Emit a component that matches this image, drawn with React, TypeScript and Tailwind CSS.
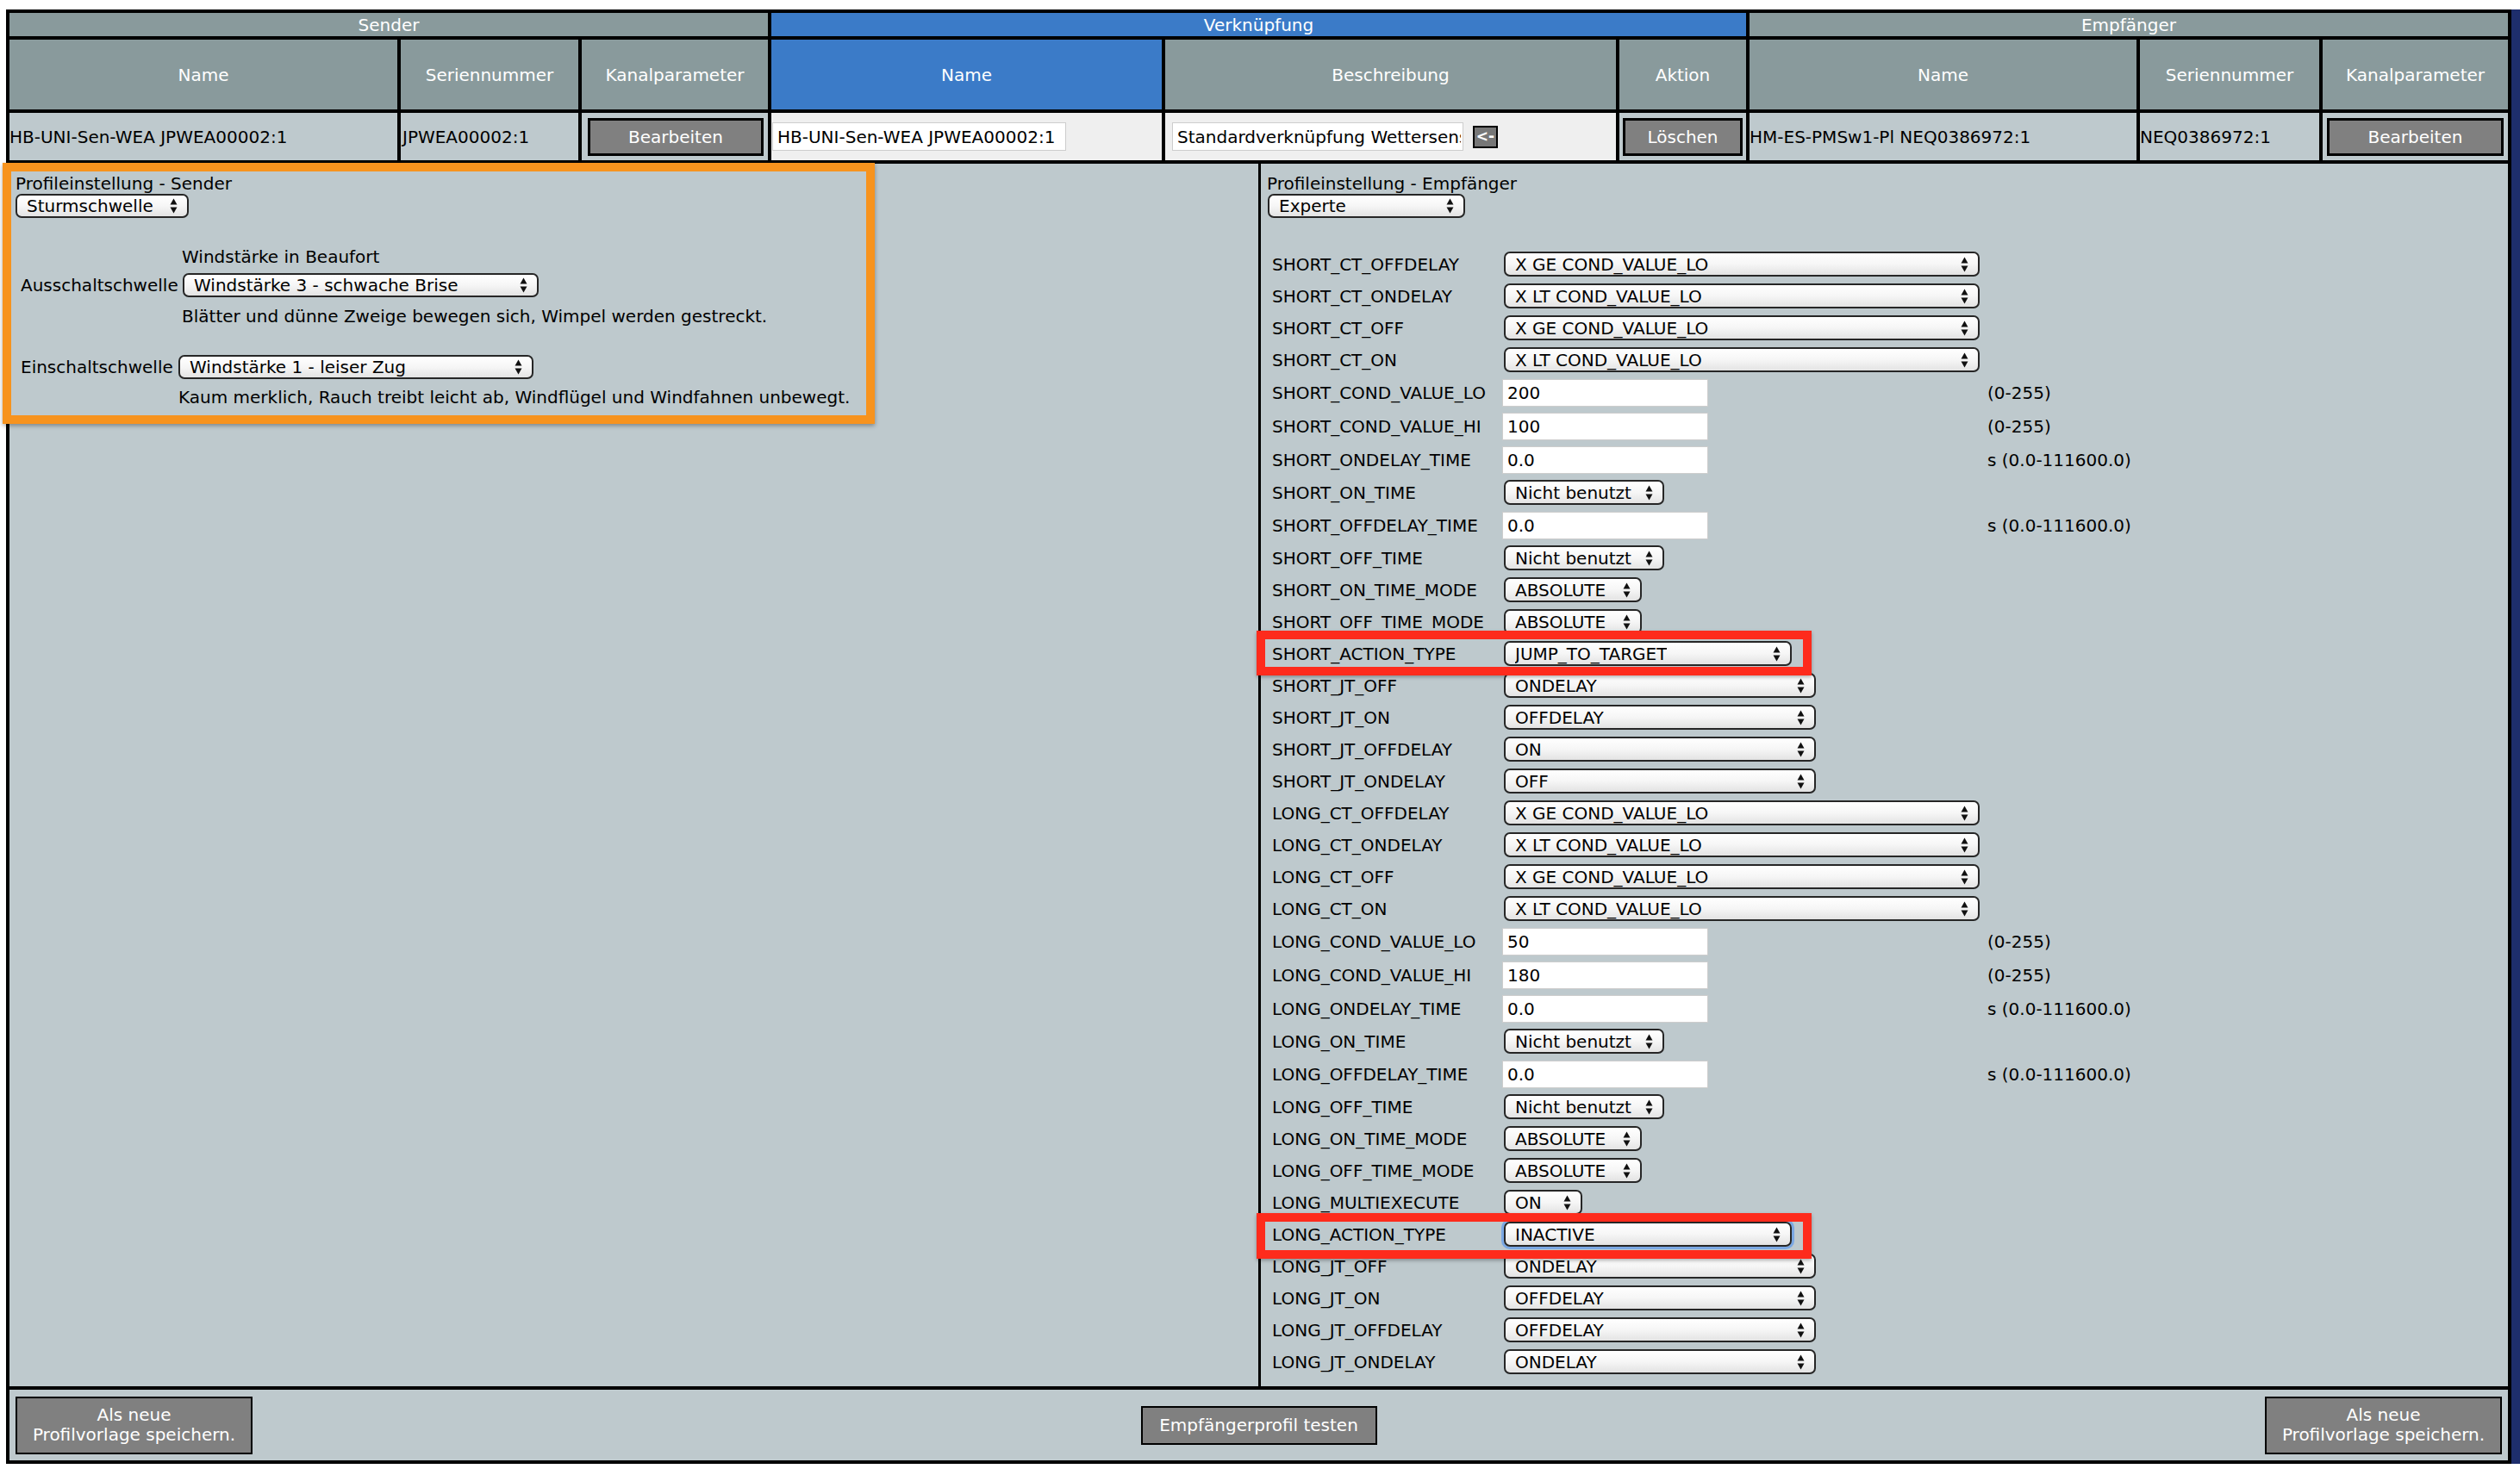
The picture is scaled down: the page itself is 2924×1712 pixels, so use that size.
import React from 'react';
import clsx from 'clsx';

// Gerätekonfiguration: Direktverknüpfung Sender -> Empfänger (Profileinstellung)

const HEAD = 'flex items-center justify-center bg-[#899a9c] text-white';
const HEAD_BLUE = 'flex items-center justify-center bg-[#3b7bc8] text-white';
const CELL = 'flex items-center bg-[#bec9cd]';
const CELL_LIGHT = 'flex items-center bg-[#efefef]';

const Arrows = () => (
  <svg width="9" height="18" viewBox="0 0 9 18" className="absolute right-[11px] top-1/2 -translate-y-1/2">
    <path d="M0.5 7.5 L4.5 0.5 L8.5 7.5 Z" fill="#111" />
    <path d="M0.5 10.5 L8.5 10.5 L4.5 17.5 Z" fill="#111" />
  </svg>
);

const Select: React.FC<{ value: string; width: string; height?: string; focus?: boolean }> = ({ value, width, height, focus }) => (
  <div
    className={clsx(
      'relative flex shrink-0 items-center rounded-[7px] border-2 border-[#262626] bg-linear-to-b from-white via-[#f6f6f6] to-[#e3e3e3] pl-[11px] pr-[26px] text-black',
      width,
      height ?? 'h-[29px]',
      focus && 'shadow-[0_0_0_3px_#7aa7e3]'
    )}
  >
    <span className="truncate whitespace-nowrap">{value}</span>
    <Arrows />
  </div>
);

const TextInput: React.FC<{ value: string; className?: string }> = ({ value, className }) => (
  <div className={clsx('flex shrink-0 items-center border border-[#cdcdcd] bg-white pl-[5px] pr-[2px] text-black', className)}>
    <span className="block w-full overflow-hidden whitespace-nowrap">{value}</span>
  </div>
);

const Btn: React.FC<{ children: React.ReactNode; className?: string }> = ({ children, className }) => (
  <div className={clsx('flex items-center justify-center border-black bg-[#808080] text-center text-white', className)}>
    {children}
  </div>
);

type Row = { label: string; kind: 's' | 'i'; value: string; w?: string; hint?: string; focus?: boolean };

const WIDE = 'w-[552px]';
const JT = 'w-[362px]';
const AT = 'w-[334px]';
const NB = 'w-[186px]';
const ABS = 'w-[160px]';
const RANGE = '(0-255)';
const TIME = 's (0.0-111600.0)';

const rows: Row[] = [
  { label: 'SHORT_CT_OFFDELAY', kind: 's', value: 'X GE COND_VALUE_LO', w: WIDE },
  { label: 'SHORT_CT_ONDELAY', kind: 's', value: 'X LT COND_VALUE_LO', w: WIDE },
  { label: 'SHORT_CT_OFF', kind: 's', value: 'X GE COND_VALUE_LO', w: WIDE },
  { label: 'SHORT_CT_ON', kind: 's', value: 'X LT COND_VALUE_LO', w: WIDE },
  { label: 'SHORT_COND_VALUE_LO', kind: 'i', value: '200', hint: RANGE },
  { label: 'SHORT_COND_VALUE_HI', kind: 'i', value: '100', hint: RANGE },
  { label: 'SHORT_ONDELAY_TIME', kind: 'i', value: '0.0', hint: TIME },
  { label: 'SHORT_ON_TIME', kind: 's', value: 'Nicht benutzt', w: NB },
  { label: 'SHORT_OFFDELAY_TIME', kind: 'i', value: '0.0', hint: TIME },
  { label: 'SHORT_OFF_TIME', kind: 's', value: 'Nicht benutzt', w: NB },
  { label: 'SHORT_ON_TIME_MODE', kind: 's', value: 'ABSOLUTE', w: ABS },
  { label: 'SHORT_OFF_TIME_MODE', kind: 's', value: 'ABSOLUTE', w: ABS },
  { label: 'SHORT_ACTION_TYPE', kind: 's', value: 'JUMP_TO_TARGET', w: AT },
  { label: 'SHORT_JT_OFF', kind: 's', value: 'ONDELAY', w: JT },
  { label: 'SHORT_JT_ON', kind: 's', value: 'OFFDELAY', w: JT },
  { label: 'SHORT_JT_OFFDELAY', kind: 's', value: 'ON', w: JT },
  { label: 'SHORT_JT_ONDELAY', kind: 's', value: 'OFF', w: JT },
  { label: 'LONG_CT_OFFDELAY', kind: 's', value: 'X GE COND_VALUE_LO', w: WIDE },
  { label: 'LONG_CT_ONDELAY', kind: 's', value: 'X LT COND_VALUE_LO', w: WIDE },
  { label: 'LONG_CT_OFF', kind: 's', value: 'X GE COND_VALUE_LO', w: WIDE },
  { label: 'LONG_CT_ON', kind: 's', value: 'X LT COND_VALUE_LO', w: WIDE },
  { label: 'LONG_COND_VALUE_LO', kind: 'i', value: '50', hint: RANGE },
  { label: 'LONG_COND_VALUE_HI', kind: 'i', value: '180', hint: RANGE },
  { label: 'LONG_ONDELAY_TIME', kind: 'i', value: '0.0', hint: TIME },
  { label: 'LONG_ON_TIME', kind: 's', value: 'Nicht benutzt', w: NB },
  { label: 'LONG_OFFDELAY_TIME', kind: 'i', value: '0.0', hint: TIME },
  { label: 'LONG_OFF_TIME', kind: 's', value: 'Nicht benutzt', w: NB },
  { label: 'LONG_ON_TIME_MODE', kind: 's', value: 'ABSOLUTE', w: ABS },
  { label: 'LONG_OFF_TIME_MODE', kind: 's', value: 'ABSOLUTE', w: ABS },
  { label: 'LONG_MULTIEXECUTE', kind: 's', value: 'ON', w: 'w-[91px]' },
  { label: 'LONG_ACTION_TYPE', kind: 's', value: 'INACTIVE', w: AT, focus: true },
  { label: 'LONG_JT_OFF', kind: 's', value: 'ONDELAY', w: JT },
  { label: 'LONG_JT_ON', kind: 's', value: 'OFFDELAY', w: JT },
  { label: 'LONG_JT_OFFDELAY', kind: 's', value: 'OFFDELAY', w: JT },
  { label: 'LONG_JT_ONDELAY', kind: 's', value: 'ONDELAY', w: JT },
];

const LinkTable = () => (
  <div className="grid grid-cols-[450px_206px_216px_453px_523px_147px_449px_208px_215px] grid-rows-[27px_81px_55px] gap-[4px]">
    <div className={clsx(HEAD, 'col-span-3')}>Sender</div>
    <div className={clsx(HEAD_BLUE, 'col-span-3')}>Verknüpfung</div>
    <div className={clsx(HEAD, 'col-span-3')}>Empfänger</div>

    <div className={HEAD}>Name</div>
    <div className={HEAD}>Seriennummer</div>
    <div className={HEAD}>Kanalparameter</div>
    <div className={HEAD_BLUE}>Name</div>
    <div className={HEAD}>Beschreibung</div>
    <div className={HEAD}>Aktion</div>
    <div className={HEAD}>Name</div>
    <div className={HEAD}>Seriennummer</div>
    <div className={HEAD}>Kanalparameter</div>

    <div className={clsx(CELL, 'whitespace-nowrap')}>HB-UNI-Sen-WEA JPWEA00002:1</div>
    <div className={clsx(CELL, 'pl-[2px] whitespace-nowrap')}>JPWEA00002:1</div>
    <div className={clsx(CELL, 'pl-[7px] pr-[5px]')}>
      <Btn className="h-[44px] w-full border-[3px]">Bearbeiten</Btn>
    </div>
    <div className={clsx(CELL_LIGHT, 'pl-[1px]')}>
      <TextInput value="HB-UNI-Sen-WEA JPWEA00002:1" className="h-[33px] w-[341px]" />
    </div>
    <div className={clsx(CELL_LIGHT, 'pl-[8px]')}>
      <TextInput value="Standardverknüpfung Wettersensor" className="h-[33px] w-[338px]" />
      <div className="ml-[11px] flex h-[26px] w-[29px] items-center justify-center border-2 border-black bg-[#777777] text-[17px] font-bold text-white">
        &lt;-
      </div>
    </div>
    <div className={clsx(CELL, 'px-[4px]')}>
      <Btn className="h-[44px] w-full border-[3px]">Löschen</Btn>
    </div>
    <div className={clsx(CELL, 'whitespace-nowrap')}>HM-ES-PMSw1-Pl NEQ0386972:1</div>
    <div className={clsx(CELL, 'whitespace-nowrap')}>NEQ0386972:1</div>
    <div className={clsx(CELL, 'px-[5px]')}>
      <Btn className="h-[44px] w-full border-[3px]">Bearbeiten</Btn>
    </div>
  </div>
);

const SenderPanel = () => (
  <div className="w-[1449px] bg-[#bec9cd] pl-[7px] pt-[11px]">
    <div className="leading-[24px]">Profileinstellung - Sender</div>
    <Select value="Sturmschwelle" width="w-[201px]" height="h-[28px]" />

    <div className="mt-[33px] flex flex-col">
      <div className="flex h-[24px] items-center">
        <div className="w-[193px]" />
        <div>Windstärke in Beaufort</div>
      </div>
      <div className="mt-[6px] flex items-center">
        <div className="w-[194px] pl-[6px]">Ausschaltschwelle</div>
        <Select value="Windstärke 3 - schwache Brise" width="w-[413px]" height="h-[28px]" />
      </div>
      <div className="mt-[9px] flex h-[24px] items-center">
        <div className="w-[193px]" />
        <div>Blätter und dünne Zweige bewegen sich, Wimpel werden gestreckt.</div>
      </div>
    </div>

    <div className="mt-[32px] flex flex-col">
      <div className="flex items-center">
        <div className="w-[189px] pl-[6px]">Einschaltschwelle</div>
        <Select value="Windstärke 1 - leiser Zug" width="w-[412px]" height="h-[28px]" />
      </div>
      <div className="mt-[8px] flex h-[24px] items-center">
        <div className="w-[189px]" />
        <div>Kaum merklich, Rauch treibt leicht ab, Windflügel und Windfahnen unbewegt.</div>
      </div>
    </div>
  </div>
);

const ReceiverPanel = () => (
  <div className="w-[1447px] bg-[#bec9cd] pl-[7px] pt-[11px]">
    <div className="leading-[24px]">Profileinstellung - Empfänger</div>
    <div className="pl-[1px]">
      <Select value="Experte" width="w-[229px]" height="h-[28px]" />
    </div>

    <div className="mt-[35px] grid grid-cols-[273px_557px_auto]">
      {rows.map((r) => (
        <React.Fragment key={r.label}>
          <div className={clsx('flex items-center whitespace-nowrap pl-[6px]', r.kind === 'i' ? 'h-[39px]' : 'h-[37px]')}>
            {r.label}
          </div>
          <div className="flex items-center">
            {r.kind === 'i' ? (
              <TextInput value={r.value} className="h-[32px] w-[239px]" />
            ) : (
              <div className="pl-[2px]">
                <Select value={r.value} width={r.w ?? WIDE} focus={r.focus} />
              </div>
            )}
          </div>
          <div className="flex items-center whitespace-nowrap pl-[6px]">{r.hint}</div>
        </React.Fragment>
      ))}
    </div>
  </div>
);

const App: React.FC = () => {
  return (
    <div className="relative h-[1712px] w-[2924px] overflow-hidden bg-white font-['DejaVu_Sans',Verdana,sans-serif] text-[20px] text-black">
      <div className="flex pl-[7px] pt-[11px]">
        <div className="flex w-[2907px] flex-col gap-[4px] bg-black p-[4px]">
          <LinkTable />

          {/* Profile settings */}
          <div className="flex h-[1419px] gap-[3px]">
            <SenderPanel />
            <ReceiverPanel />
          </div>

          {/* Footer buttons */}
          <div className="flex h-[82px] items-center justify-between bg-[#bec9cd] px-[7px]">
            <Btn className="h-[67px] w-[275px] flex-col border-2 leading-[23px]">
              <span>Als neue</span>
              <span>Profilvorlage speichern.</span>
            </Btn>
            <Btn className="h-[45px] w-[274px] border-2">Empfängerprofil testen</Btn>
            <Btn className="h-[67px] w-[275px] flex-col border-2 leading-[23px]">
              <span>Als neue</span>
              <span>Profilvorlage speichern.</span>
            </Btn>
          </div>
        </div>
        <div className="h-[1688px] w-[10px] bg-[#1e2e6c]" />
      </div>

      {/* Screenshot annotations */}
      <div className="pointer-events-none absolute left-[3px] top-[189px] h-[303px] w-[1012px] border-[10px] border-[#f7931e] shadow-[0_2px_5px_rgba(0,0,0,0.35)]" />
      <div className="pointer-events-none absolute left-[1458px] top-[732px] h-[52px] w-[644px] border-[10px] border-[#fe2b1c] shadow-[0_2px_4px_rgba(0,0,0,0.3)]" />
      <div className="pointer-events-none absolute left-[1458px] top-[1408px] h-[53px] w-[644px] border-[10px] border-[#fe2b1c] shadow-[0_2px_4px_rgba(0,0,0,0.3)]" />
    </div>
  );
};

export default App;
